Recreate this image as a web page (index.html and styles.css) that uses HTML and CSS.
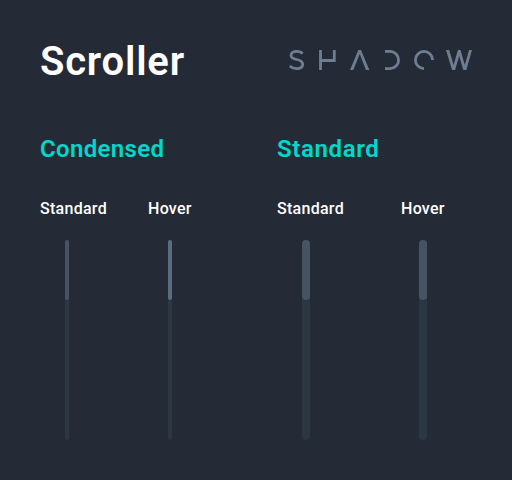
FILE: index.html
```html
<!DOCTYPE html>
<html lang="en">
<head>
<meta charset="utf-8">
<title>Scroller</title>
<link rel="stylesheet" href="styles.css">
</head>
<body>
<main class="page">
  <header class="header">
    <h1 class="title">Scroller</h1>
    <svg class="logo" width="184" height="24" viewBox="0 0 184 24" role="img" aria-label="Shadow">
      <path d="M14.8 5.300C13 3.900 11 3.300 8.600 3.300C5.300 3.300 3 4.700 3 7.200C3 9.800 5.200 10.700 8.700 11.500C12.400 12.300 14.700 13.300 14.700 16.300C14.700 19.200 12 20.700 8.600 20.700C5.800 20.700 3.500 19.600 1.800 18"/>
      <path d="M32.500 2V22M32.500 12.500H46.300V2"/>
      <path class="solid" d="M62 22L70.400 2H73L81.300 22H78L71.700 6L65.300 22Z"/>
      <path d="M97 3.400H102A8.600 8.600 0 0 1 102 20.600H97"/>
      <path d="M144.600 12A8.600 8.600 0 1 0 136 20.600"/>
      <path class="solid" d="M158 2H161.200L165.600 17L169.900 2H172.500L176.800 17L181.100 2H184L178.300 22H175.300L171.200 8L167.100 22H164.100Z"/>
    </svg>
  </header>
  <div class="groups">
    <section class="group">
      <h2 class="heading">Condensed</h2>
      <div class="variants variants-condensed">
        <div class="variant first"><span class="label">Standard</span><div class="track"><div class="thumb"></div></div></div>
        <div class="variant"><span class="label">Hover</span><div class="track"><div class="thumb hover"></div></div></div>
      </div>
    </section>
    <section class="group">
      <h2 class="heading wide-heading">Standard</h2>
      <div class="variants variants-standard">
        <div class="variant first"><span class="label">Standard</span><div class="track"><div class="thumb"></div></div></div>
        <div class="variant"><span class="label">Hover</span><div class="track"><div class="thumb"></div></div></div>
      </div>
    </section>
  </div>
</main>
</body>
</html>
```
FILE: styles.css
```css
* { box-sizing: border-box; }
body { margin: 0; background: #242b36; font-family: Roboto, sans-serif; }
.page { height: 480px; padding: 36px 40px 0; }
.header { display: flex; justify-content: space-between; height: 100px; }
.title { margin: 0; color: #fff; font-size: 40px; font-weight: 600; line-height: 52px; letter-spacing: 0.8px; }
.logo { margin-top: 12px; fill: none; stroke: #6e7e92; stroke-width: 2.8; }
.logo .solid { fill: #6e7e92; stroke: none; }
.groups { display: grid; grid-template-columns: 237px 1fr; }
.heading { margin: 0 0 34px; height: 26px; color: #00d8cd; font-size: 24px; font-weight: 600; line-height: 26px; letter-spacing: 0.35px; white-space: nowrap; }
.wide-heading { letter-spacing: 0.65px; }
.variants { display: grid; }
.variants-condensed { grid-template-columns: 108px 1fr; --bar: 4px; --first: 25px; --second: 20px; }
.variants-standard { grid-template-columns: 124px 1fr; --bar: 8px; --first: 25px; --second: 18px; }
.label { display: block; height: 44px; color: #fff; font-size: 16px; font-weight: 500; line-height: 26px; letter-spacing: 0.28px; white-space: nowrap; }
.track { width: var(--bar); height: 200px; margin-left: var(--second); border-radius: 4px; background: #2b3743; }
.first .track { margin-left: var(--first); }
.thumb { height: 60px; border-radius: 4px; background: #465363; }
.hover { background: #5c6c7e; }
```
